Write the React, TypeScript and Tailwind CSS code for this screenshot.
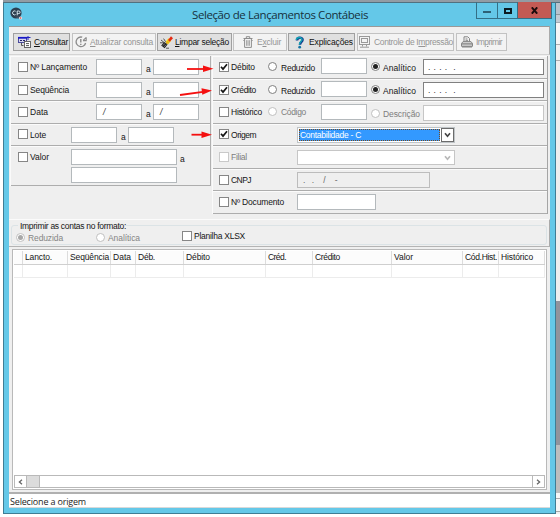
import { useLayoutEffect, useRef, useState } from 'react';
import type { ReactNode } from 'react';
import { clsx } from 'clsx';

/* Text line whose letter spacing is adjusted so that it fills the given width. */
function Txt({ w, className, children }: { w: number; className?: string; children: ReactNode }) {
  const ref = useRef<HTMLSpanElement>(null);
  const [spacing, setSpacing] = useState(0);
  useLayoutEffect(() => {
    const el = ref.current;
    if (!el) return;
    const n = (el.textContent ?? '').length;
    const natural = el.getBoundingClientRect().width - spacing * n;
    setSpacing((w - natural) / n);
  }, [w]);
  return (
    <span className={clsx('block shrink-0 whitespace-pre', className)} style={{ width: w }}>
      <span ref={ref} className="inline-block" style={{ letterSpacing: spacing }}>
        {children}
      </span>
    </span>
  );
}

function Check({ on, dim, className }: { on?: boolean; dim?: boolean; className?: string }) {
  return (
    <span
      className={clsx(
        'block h-[10px] w-[10px] shrink-0 border bg-white',
        dim ? 'border-[#c9c9c9]' : 'border-[#868686]',
        className,
      )}
    >
      {on && (
        <svg viewBox="0 0 8 8" className="block h-[8px] w-[8px]">
          <path d="M1 3.8 3 6.1 7 1.3" fill="none" stroke="#161616" strokeWidth="1.7" />
        </svg>
      )}
    </span>
  );
}

function Radio({ on, dim, className }: { on?: boolean; dim?: boolean; className?: string }) {
  return (
    <span
      className={clsx(
        'flex h-[9px] w-[9px] shrink-0 items-center justify-center rounded-full border bg-white',
        dim ? 'border-[#c0c0c0]' : 'border-[#808080]',
        className,
      )}
    >
      {on && <span className={clsx('block h-[5px] w-[5px] rounded-full', dim ? 'bg-[#a8a8a8]' : 'bg-[#222]')} />}
    </span>
  );
}

function Field({ className, children }: { className?: string; children?: ReactNode }) {
  return (
    <div className={clsx('flex shrink-0 items-center border text-[#333]', className)}>
      {children}
    </div>
  );
}

function Row({ className, children }: { className?: string; children: ReactNode }) {
  return (
    <div className={clsx('flex shrink-0 items-start border-b border-b-[#adadad] border-t border-t-[#fbfbfb]', className)}>
      {children}
    </div>
  );
}

function ToolButton({ active, className, children }: { active?: boolean; className?: string; children: ReactNode }) {
  return (
    <button
      className={clsx(
        'flex h-[18px] shrink-0 items-center border',
        active ? 'border-[#a0a0a0] bg-[#e0e0e0] text-[#111]' : 'border-[#c2c2c2] bg-[#f3f3f3] text-[#959595]',
        className,
      )}
    >
      {children}
    </button>
  );
}

function ConsultIcon() {
  return (
    <svg viewBox="0 0 13 12" className="ml-[4px] h-[12px] w-[13px] shrink-0">
      <rect x="0.5" y="1.5" width="8" height="5" fill="#d6d6ee" stroke="#4a4a9c" />
      <path d="M0 1.8h9" stroke="#1717c8" strokeWidth="1.8" />
      <path d="M10 0v4M8 1.5h4.5" stroke="#2020c0" strokeWidth="1" />
      <path d="M2 4.5h2M5 4.5h2" stroke="#222266" />
      <rect x="6.5" y="5.5" width="6" height="6" fill="#fff" stroke="#666" />
      <path d="M8 7.6h3M8 9.6h3" stroke="#555" />
      <path d="M3.5 7v2.5h2" fill="none" stroke="#555" />
    </svg>
  );
}

function RefreshIcon() {
  return (
    <svg viewBox="0 0 12 12" className="ml-[2px] h-[12px] w-[12px] shrink-0" fill="none" stroke="#8c8c8c">
      <path d="M7.2 1.2A4.8 4.8 0 1 0 10.6 7" strokeWidth="1.3" />
      <path d="M8 4.6h3.2V1.2M8.2 4.4 11 1.6" strokeWidth="1.1" />
      <path d="M5.8 3v3.6M5.8 7.7v1.2" strokeWidth="1.4" />
    </svg>
  );
}

function BroomIcon() {
  return (
    <svg viewBox="0 0 13 13" className="ml-[2px] h-[13px] w-[13px] shrink-0">
      <path d="M5.6 5.8 8.4 2.2 11.2 4.8 8 8.4Z" fill="#f2d21c" />
      <path d="m8 4 3-3.8 2 2-3.2 3.6Z" fill="#e52a12" />
      <path d="m5.6 6.8 2.4-2 1.2 1.5-2.6 2.2Z" fill="#e8b51c" />
      <path d="M1 4l3 2.4M0 6.8h4M3.6 2.6l2 3.2" stroke="#444" strokeWidth="0.9" />
      <path d="M1.2 9.5 4.4 6l3.2 2.6-3 3.6Z" fill="#202020" />
      <path d="m2.6 9.5 2.6-2M4 10.8l2.4-2.2" stroke="#aaa" strokeWidth="0.6" />
      <path d="M6 12.2h3" stroke="#333" strokeWidth="0.8" />
    </svg>
  );
}

function BinIcon() {
  return (
    <svg viewBox="0 0 10 12" className="ml-[9px] h-[12px] w-[10px] shrink-0" fill="none" stroke="#8e8e8e">
      <path d="M0.5 2.5h9M3.3 2.2V0.7h3.4v1.5M1.6 2.6v8.8h6.8V2.6" />
      <path d="M3.6 4.2v5.6M5 4.2v5.6M6.4 4.2v5.6" strokeWidth="0.8" />
      <path d="M0.4 4.5h1M8.6 4.5h1" />
    </svg>
  );
}

function HelpIcon() {
  return (
    <svg viewBox="0 0 9 13" className="ml-[6px] h-[13px] w-[9px] shrink-0" fill="none">
      <path d="M2 4.4C2 1.2 7.6 1 7.6 3.8 7.6 6 5 5.8 5 8.8" stroke="#12388c" strokeWidth="2.5" />
      <path d="M1.3 4C1.6.9 7 .8 7 3.6 7 5.6 4.4 5.6 4.4 8.4" stroke="#12a5b5" strokeWidth="1.5" />
      <circle cx="4.7" cy="11.2" r="1.4" fill="#1474a4" />
    </svg>
  );
}

function MonitorIcon() {
  return (
    <svg viewBox="0 0 11 12" className="ml-[1px] h-[12px] w-[11px] shrink-0" fill="none" stroke="#999">
      <rect x="0.5" y="0.5" width="10" height="8" />
      <rect x="2.5" y="2.5" width="6" height="4" />
      <path d="M3.5 8.5v2M7.5 8.5v2M1 11.2h9" />
    </svg>
  );
}

function PrinterIcon() {
  return (
    <svg viewBox="0 0 12 12" className="ml-[4px] h-[12px] w-[12px] shrink-0" fill="none" stroke="#858585">
      <path d="M3 5.5V.8h3.8L8.5 2.5v3M4.5 3h2M4.5 4.7h2.6" />
      <path d="M.5 7.5 2 5.6h8l1.5 1.9v2.8H.5Z" fill="#d5d5d5" />
      <path d="M.5 7.8h11M1 10.8h10" strokeWidth="1.3" />
    </svg>
  );
}

function AppIcon() {
  return (
    <svg viewBox="0 0 13 13" className="ml-[6px] mt-[4px] h-[13px] w-[13px] shrink-0">
      <circle cx="6" cy="6" r="5.6" fill="#2c3f50" />
      <path d="M5.6 4.2A2 2 0 1 0 5.6 7.6M7.2 8.4V4h1.6a1.3 1.3 0 0 1 0 2.6H7.2" fill="none" stroke="#d6e6ee" strokeWidth="1" />
      <path d="M5 9.5h6v2H8Z" fill="#46576a" />
      <circle cx="10.6" cy="11" r="1.6" fill="#f4e6e6" />
      <circle cx="10.6" cy="11" r="0.8" fill="#d04848" />
    </svg>
  );
}

function Chevron({ className }: { className: string }) {
  return (
    <svg viewBox="0 0 7 6" className={clsx('h-[6px] w-[7px]', className)}>
      <path d="M1 1.3 3.5 4.2 6 1.3" fill="none" stroke="currentColor" strokeWidth="1.7" />
    </svg>
  );
}

function TitleBar() {
  return (
    <div className="flex h-[22px] shrink-0 items-start">
      <AppIcon />
      <Txt w={176} className="ml-[169px] mt-[3px] font-['Open_Sans','Noto_Sans',sans-serif] text-[11.5px] leading-[17px] text-[#17313d]">
        Seleção de Lançamentos Contábeis
      </Txt>
      <div className="-mt-px ml-[108px] flex h-[17px] border border-t-0 border-[#346f86]">
        <div className="flex w-[21px] items-center justify-center border-r border-[#346f86]">
          <span className="mt-[3px] block h-[2px] w-[8px] bg-[#2d6176]" />
        </div>
        <div className="flex w-[20px] items-center justify-center border-r border-[#346f86]">
          <span className="mt-px block h-[6px] w-[8px] border-2 border-[#0c1b22]" />
        </div>
        <div className="flex w-[33px] items-center justify-center bg-[#c35a54]">
          <svg viewBox="0 0 7 7" className="h-[7px] w-[7px]">
            <path d="M.8.3 6.2 6.7M6.2.3.8 6.7" stroke="#1a0b0b" strokeWidth="1.9" />
          </svg>
        </div>
      </div>
    </div>
  );
}

function Toolbar() {
  return (
    <div className="flex h-[29px] shrink-0 items-start border-b border-r border-t border-b-[#d4d4d4] border-r-[#aaa] border-t-[#999] pl-[4px] pt-[6px]">
      <ToolButton active className="w-[57px]">
        <ConsultIcon />
        <Txt w={34} className="ml-[3px]"><u>C</u>onsultar</Txt>
      </ToolButton>
      <ToolButton className="ml-[2px] w-[84px]">
        <RefreshIcon />
        <Txt w={63} className="ml-[3px]"><u>A</u>tualizar consulta</Txt>
      </ToolButton>
      <ToolButton active className="ml-[1px] w-[75px]">
        <BroomIcon />
        <Txt w={54} className="ml-[2px]"><u>L</u>impar seleção</Txt>
      </ToolButton>
      <ToolButton className="ml-[1px] w-[54px]">
        <BinIcon />
        <Txt w={24} className="ml-[4px]">E<u>x</u>cluir</Txt>
      </ToolButton>
      <ToolButton active className="ml-[1px] w-[67px]">
        <HelpIcon />
        <Txt w={44} className="ml-[5px]">Explicações</Txt>
      </ToolButton>
      <ToolButton className="ml-[2px] w-[97px]">
        <MonitorIcon />
        <Txt w={79} className="ml-[4px]">Controle de I<u>m</u>pressão</Txt>
      </ToolButton>
      <ToolButton className="ml-[2px] w-[51px]">
        <PrinterIcon />
        <Txt w={26} className="ml-[3px]">Im<u>p</u>rimir</Txt>
      </ToolButton>
    </div>
  );
}

const box = 'h-[16px] border-[#b4b9bc] bg-white';

function LeftFilters() {
  return (
    <div className="flex w-[201px] shrink-0 flex-col self-start border-l border-r border-l-[#fafafa] border-r-[#b0b0b0]">
      <Row className="h-[23px]">
        <Check className="ml-[7px] mt-[5px]" />
        <Txt w={57} className="ml-[2px] mt-[5px]">Nº Lançamento</Txt>
        <Field className={clsx('ml-[9px] mt-[2px] w-[46px]', box)} />
        <Txt w={4} className="ml-[4px] mt-[7px]">a</Txt>
        <Field className={clsx('ml-[3px] mt-[2px] w-[46px]', box)} />
      </Row>
      <Row className="h-[22px]">
        <Check className="ml-[7px] mt-[5px]" />
        <Txt w={39} className="ml-[2px] mt-[5px]">Seqüência</Txt>
        <Field className={clsx('ml-[27px] mt-[2px] w-[46px]', box)} />
        <Txt w={4} className="ml-[4px] mt-[7px]">a</Txt>
        <Field className={clsx('ml-[3px] mt-[2px] w-[46px]', box)} />
      </Row>
      <Row className="h-[23px]">
        <Check className="ml-[7px] mt-[5px]" />
        <Txt w={18} className="ml-[2px] mt-[5px]">Data</Txt>
        <Field className={clsx('ml-[48px] mt-[2px] w-[46px] pl-[6px]', box)}><i>/</i></Field>
        <Txt w={4} className="ml-[4px] mt-[7px]">a</Txt>
        <Field className={clsx('ml-[3px] mt-[2px] w-[46px] pl-[6px]', box)}><i>/</i></Field>
      </Row>
      <Row className="h-[22px]">
        <Check className="ml-[7px] mt-[4px]" />
        <Txt w={16} className="ml-[2px] mt-[5px]">Lote</Txt>
        <Field className={clsx('ml-[25px] mt-[2px] w-[46px]', box)} />
        <Txt w={4} className="ml-[4px] mt-[7px]">a</Txt>
        <Field className={clsx('ml-[3px] mt-[2px] w-[46px]', box)} />
      </Row>
      <Row className="h-[40px]">
        <Check className="ml-[7px] mt-[5px]" />
        <Txt w={19} className="ml-[2px] mt-[5px]">Valor</Txt>
        <div className="ml-[22px] mt-[2px] flex flex-col gap-[2px]">
          <Field className={clsx('w-[106px]', box)} />
          <Field className={clsx('w-[106px]', box)} />
        </div>
        <Txt w={4} className="ml-[3px] mt-[7px]">a</Txt>
      </Row>
    </div>
  );
}

function AccountRow({ label, labelWidth, gap, className }: { label: string; labelWidth: number; gap: string; className: string }) {
  return (
    <Row className={className}>
      <Check on className="ml-[6px] mt-[5px]" />
      <Txt w={labelWidth} className="ml-[2px] mt-[5px]">{label}</Txt>
      <Radio className={clsx('mt-[5px]', gap)} />
      <Txt w={34} className="ml-[4px] mt-[6px]">Reduzido</Txt>
      <Field className={clsx('ml-[6px] mt-[1px] w-[46px]', box)} />
      <Radio on className="ml-[4px] mt-[5px]" />
      <Txt w={33} className="ml-[3px] mt-[6px]">Analítico</Txt>
      <Field className="ml-[7px] mt-[2px] h-[16px] w-[121px] border-[#808080] bg-white pl-[4px]">
        <Txt w={28}>{'. . . .  .'}</Txt>
      </Field>
    </Row>
  );
}

function RightFilters() {
  return (
    <div className="ml-px flex w-[336px] shrink-0 flex-col border-l border-r border-l-[#fafafa] border-r-[#a5a5a5]">
      <AccountRow label="Débito" labelWidth={24} gap="ml-[13px]" className="h-[23px]" />
      <AccountRow label="Crédito" labelWidth={25} gap="ml-[12px]" className="h-[22px]" />
      <Row className="h-[23px]">
        <Check className="ml-[6px] mt-[5px]" />
        <Txt w={31} className="ml-[2px] mt-[5px]">Histórico</Txt>
        <Radio dim className="ml-[6px] mt-[5px]" />
        <Txt w={25} className="ml-[4px] mt-[5px] text-[#7d7d7d]">Código</Txt>
        <Field className={clsx('ml-[15px] mt-[2px] w-[46px]', box)} />
        <Radio dim className="ml-[4px] mt-[7px]" />
        <Txt w={37} className="ml-[3px] mt-[7px] text-[#7d7d7d]">Descrição</Txt>
        <Field className="ml-[3px] mt-[3px] h-[16px] w-[121px] border-[#c6c6c6] bg-white" />
      </Row>
      <Row className="h-[22px]">
        <Check on className="ml-[6px] mt-[4px]" />
        <Txt w={25} className="ml-[2px] mt-[5px]">Origem</Txt>
        <Field className="ml-[41px] mt-[2px] h-[16px] w-[158px] justify-between border-[#bfc4c7] bg-white pl-px">
          <div className="flex h-[12px] w-[141px] items-center border border-dotted border-[#7a4a1c] bg-[#3399ff] text-white">
            <Txt w={61}>Contabilidade - C</Txt>
          </div>
          <div className="flex h-[14px] w-[13px] items-center justify-center border border-[#6c6c6c] bg-white text-[#444]">
            <Chevron className="shrink-0" />
          </div>
        </Field>
      </Row>
      <Row className="h-[23px]">
        <Check dim className="ml-[6px] mt-[5px]" />
        <Txt w={16} className="ml-[2px] mt-[5px] text-[#7d7d7d]">Filial</Txt>
        <Field className="ml-[50px] mt-[3px] h-[15px] w-[158px] justify-end border-[#c6c6c6] bg-white pr-[3px] text-[#b8b8b8]">
          <Chevron className="shrink-0" />
        </Field>
      </Row>
      <Row className="h-[22px]">
        <Check className="ml-[6px] mt-[5px]" />
        <Txt w={20} className="ml-[2px] mt-[5px]">CNPJ</Txt>
        <Field className="ml-[46px] mt-[2px] h-[16px] w-[133px] border-[#bcbcbc] bg-[#efefef] pl-[5px] text-[#666]">
          <Txt w={35}>{'.  .   /   -'}</Txt>
        </Field>
      </Row>
      <Row className="h-[23px]">
        <Check className="ml-[6px] mt-[5px]" />
        <Txt w={53} className="ml-[2px] mt-[5px]">Nº Documento</Txt>
        <Field className={clsx('ml-[13px] mt-[2px] w-[79px]', box)} />
      </Row>
    </div>
  );
}

function FormatPanel() {
  return (
    <div className="mt-[5px] flex h-[28px] shrink-0 flex-col border-b border-r border-t border-b-[#b4b4b4] border-r-[#aaa] border-t-[#fbfbfb]">
      <div className="ml-[2px] mr-[2px] mt-[5px] h-[20px] rounded-[3px] border border-[#dbe3e6]">
        <Txt w={106} className="-mt-[5px] ml-[6px] bg-[#efefef] pl-[2px]">Imprimir as contas no formato:</Txt>
        <div className="flex items-start">
          <Radio on dim className="ml-[4px] mt-[1px]" />
          <Txt w={35} className="ml-[3px] mt-[1px] text-[#858585]">Reduzida</Txt>
          <Radio dim className="ml-[33px] mt-[1px]" />
          <Txt w={32} className="ml-[3px] mt-[1px] text-[#858585]">Analítica</Txt>
          <Check className="-mt-px ml-[42px]" />
          <Txt w={51} className="ml-[2px] -mt-px">Planilha XLSX</Txt>
        </div>
      </div>
    </div>
  );
}

const columns = [
  { title: '', cell: 'w-[9px]', text: 0 },
  { title: 'Lancto.', cell: 'w-[45px]', text: 27 },
  { title: 'Seqüência', cell: 'w-[43px]', text: 39 },
  { title: 'Data', cell: 'w-[25px]', text: 18 },
  { title: 'Déb.', cell: 'w-[48px]', text: 17 },
  { title: 'Débito', cell: 'w-[82px]', text: 24 },
  { title: 'Créd.', cell: 'w-[47px]', text: 18 },
  { title: 'Crédito', cell: 'w-[79px]', text: 25 },
  { title: 'Valor', cell: 'w-[71px]', text: 19 },
  { title: 'Cód.Hist.', cell: 'w-[36px]', text: 32 },
  { title: 'Histórico', cell: 'w-[46px]', text: 32 },
];

function ResultGrid() {
  return (
    <div className="ml-[3px] mt-[2px] flex h-[241px] w-[535px] shrink-0 flex-col border border-[#b9b9b9] bg-white p-px">
      <div className="flex h-[14px] shrink-0 border-b border-[#cfcfcf] bg-[#fcfcfc]">
        {columns.map((c) => (
          <div key={c.title} className={clsx('flex shrink-0 items-center border-r border-[#dcdcdc] pl-[2px]', c.cell)}>
            {c.title && <Txt w={c.text}>{c.title}</Txt>}
          </div>
        ))}
      </div>
      <div className="flex h-[13px] shrink-0 border-b border-[#ececec]">
        {columns.map((c) => (
          <div key={c.title} className={clsx('shrink-0 border-r border-[#ececec]', c.cell)} />
        ))}
      </div>
      <div className="mt-auto flex h-[13px] shrink-0 items-stretch border border-[#b9b9b9] text-[#666]">
        <div className="flex w-[11px] items-center justify-center">
          <svg viewBox="0 0 5 6" className="h-[6px] w-[5px]"><path d="M4 .8 1.4 3 4 5.2" fill="none" stroke="currentColor" strokeWidth="1.3" /></svg>
        </div>
        <div className="w-[14px] border-x border-[#b9b9b9] bg-[#dcdcdc]" />
        <div className="ml-auto flex w-[12px] items-center justify-center border-l border-[#b9b9b9]">
          <svg viewBox="0 0 5 6" className="h-[6px] w-[5px]"><path d="M1 .8 3.6 3 1 5.2" fill="none" stroke="currentColor" strokeWidth="1.3" /></svg>
        </div>
      </div>
    </div>
  );
}

/* Red annotation arrows lying over the filter panels. */
function Arrows() {
  return (
    <svg viewBox="0 0 50 90" className="absolute left-[170px] top-[56px] h-[90px] w-[50px]">
      <g stroke="#f41010" strokeWidth="1.8" fill="#f41010">
        <path d="M17 13h19" />
        <path d="M33 9.6 43.5 12.8 33 16Z" stroke="none" />
        <path d="M10 39l23-3.2" />
        <path d="M31.5 32.2 42 34.4 32.3 38.8Z" stroke="none" />
        <path d="M21.5 78.7h13" />
        <path d="M31.5 75.5 42 78.8 31.5 82Z" stroke="none" />
      </g>
    </svg>
  );
}

/* Slice of the application behind the dialog. */
function Backdrop() {
  return (
    <div className="flex w-[4px] shrink-0 flex-col bg-[#f0f0f0]">
      <div className="h-[12px] border-b border-[#8f969c] bg-[#b9c3cd]" />
      <div className="h-[8px] border-b border-[#a4abb2] bg-[#c3ccd4]" />
      <div className="h-[22px] border-b border-[#aeaeae] bg-[#f6f6f6]" />
      <div className="h-[16px] border-b border-[#aeaeae]" />
      <div className="h-[240px] bg-[#eeeeee]" />
      <div className="h-[144px] bg-[#92939b]" />
      <div className="h-[48px] bg-[#bdbdbd]" />
      <div className="h-[5px] bg-[#f7f7f7]" />
      <div className="h-[14px] border-y border-[#a9a9a9] bg-[#f7f7f7]" />
    </div>
  );
}

export default function App() {
  return (
    <div className="relative flex h-[517px] w-[560px] flex-col overflow-hidden bg-white font-['Liberation_Sans',Arial,sans-serif] text-[8.5px] leading-[11px] text-[#151515]">
      <div className="ml-[3px] h-[3px] shrink-0 border-b border-[#51717f] bg-[#929ca4]" />
      <div className="flex h-[511px] shrink-0">
        <div className="ml-[3px] flex w-[553px] shrink-0 flex-col border border-t-0 border-[#3f7d94] bg-[#64c8e8]">
          <TitleBar />
          <div className="ml-[5px] mt-px flex h-[482px] w-[541px] shrink-0 flex-col bg-[#efefef]">
            <Toolbar />
            <div className="flex h-[159px] shrink-0 pl-px pt-px">
              <LeftFilters />
              <RightFilters />
            </div>
            <FormatPanel />
            <ResultGrid />
            <div className="mt-auto flex h-[16px] shrink-0 items-center border-b border-t-2 border-b-[#d9d9d9] border-t-[#b0b0b0] bg-white pt-[2px]">
              <Txt w={76} className="ml-px font-['Open_Sans','Noto_Sans',sans-serif] text-[9px] text-[#1c1c1c]">Selecione a origem</Txt>
            </div>
          </div>
        </div>
        <Backdrop />
      </div>
      <Arrows />
    </div>
  );
}
